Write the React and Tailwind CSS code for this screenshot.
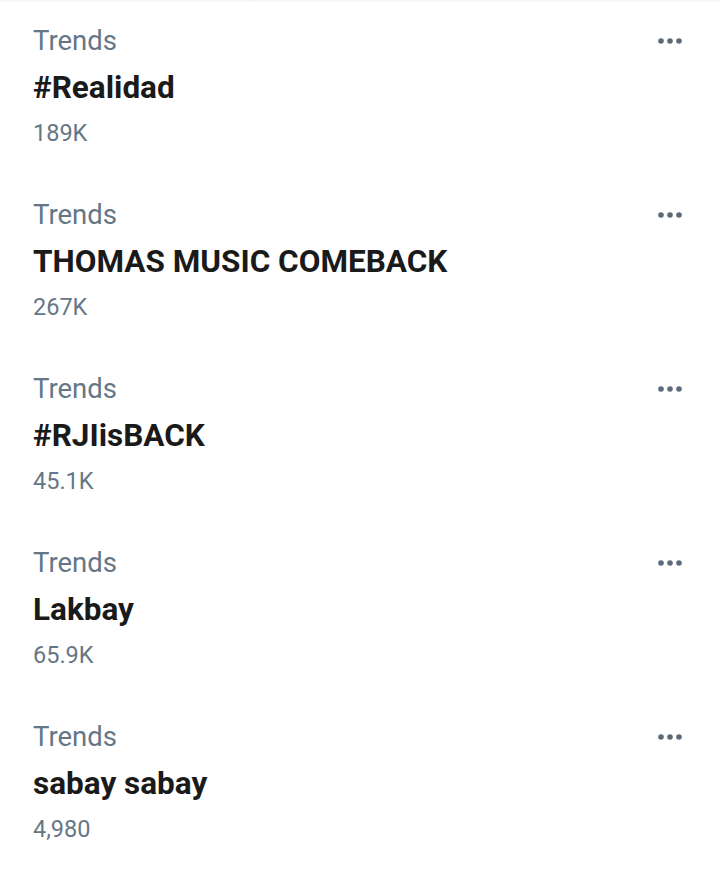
const trends = [
  { title: "#Realidad", count: "189K" },
  { title: "THOMAS MUSIC COMEBACK", count: "267K" },
  { title: "#RJIisBACK", count: "45.1K" },
  { title: "Lakbay", count: "65.9K" },
  { title: "sabay sabay", count: "4,980" },
];

function Dots() {
  return (
    <svg width="26" height="8" viewBox="0 0 26 8" className="text-[#5b6b7a]">
      <circle cx="4" cy="4" r="2.8" fill="currentColor" />
      <circle cx="13" cy="4" r="2.8" fill="currentColor" />
      <circle cx="22" cy="4" r="2.8" fill="currentColor" />
    </svg>
  );
}

export default function App() {
  return (
    <div className="w-[720px] min-h-[886px] bg-white font-['Roboto',sans-serif]">
      <div className="h-[3px] bg-gradient-to-b from-[#f2f2f2] to-white" />
      <div className="pt-[20px]">
        {trends.map((t) => (
          <div key={t.title} className="h-[174px] pl-[33px] pr-[37px]">
            <div className="flex items-center justify-between">
              <span className="text-[27.5px] leading-[36px] text-[#657786]">Trends</span>
              <Dots />
            </div>
            <p className="text-[31.5px] leading-[58px] font-bold text-[#1a1a1a]">
              {t.title}
            </p>
            <p className="text-[23.5px] leading-[32px] text-[#657786]">{t.count}</p>
          </div>
        ))}
      </div>
    </div>
  );
}
